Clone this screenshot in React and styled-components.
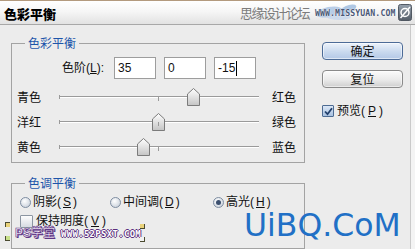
import React from "react";
import styled, { createGlobalStyle } from "styled-components";

const Global = createGlobalStyle`
  html, body { margin: 0; padding: 0; background: #ececec; }
  #root { width: 415px; height: 249px; overflow: hidden; }
`;

const FONT = `"Liberation Sans", "Noto Sans CJK SC", sans-serif`;
const CJK = `"Noto Sans CJK SC", sans-serif`;

const Window = styled.div`
  position: relative;
  width: 415px;
  height: 249px;
  overflow: hidden;
  display: flex;
  flex-direction: column;
  background: #f4f4f4;
  font-family: ${FONT};
  font-size: 12px;
  color: #111;
`;

const TitleBar = styled.div`
  flex: 0 0 auto;
  height: 23px;
  border-top: 1px solid #b39a7e;
  border-bottom: 1px solid #a8a8a8;
  background: linear-gradient(#ffffff, #f6f6f6 45%, #e2e2e2);
  display: flex;
  align-items: center;
  padding: 0 3px 0 4px;
`;

const Title = styled.span`
  font-family: ${CJK};
  font-weight: 900;
  font-size: 13px;
  line-height: 14px;
  color: #000;
  margin-top: 2px;
`;

const TitleRight = styled.div`
  margin-left: auto;
  display: flex;
  align-items: center;
`;

const Forum = styled.span`
  font-family: ${CJK};
  font-size: 13px;
  line-height: 14px;
  letter-spacing: -1.5px;
  color: #7c7c7c;
  margin-right: 6px;
`;

const Logo = styled.div`
  position: relative;
  width: 97px;
  height: 20px;
  display: flex;
  align-items: center;
`;

const Swoosh = styled.svg`
  position: absolute;
  left: 0;
  top: 0;
`;

const LogoIcon = styled.svg`
  position: absolute;
  right: 0;
  top: 1px;
`;

const LogoText = styled.span`
  position: relative;
  z-index: 1;
  font-family: "DejaVu Sans Mono", monospace;
  font-weight: bold;
  font-size: 8.2px;
  line-height: 10px;
  letter-spacing: 0.1px;
  color: #4b5876;
  text-shadow: 0 0 1px #fff, 0 0 1px #fff;
`;

const Content = styled.div`
  flex: 1;
  display: flex;
`;

const Panel = styled.div`
  width: 399px;
  padding-left: 11px;
  display: flex;
  background: #ececec;
  border-right: 1px solid #cacaca;
`;

const Main = styled.div`
  width: 294px;
  padding-top: 11px;
  display: flex;
  flex-direction: column;
`;

const Group = styled.fieldset`
  margin: ${(p) => p.$top}px 0 0;
  padding: ${(p) => p.$padTop}px 0 3px;
  border: 1px solid #a3a3a3;
  min-width: 0;
  flex: ${(p) => (p.$grow ? 1 : "0 0 auto")};
`;

const Legend = styled.legend`
  margin-left: 13px;
  padding: 0 3px;
  color: #1d55aa;
  font-family: ${CJK};
  font-size: 12px;
  line-height: 14px;
`;

const LevelsRow = styled.div`
  display: flex;
  align-items: center;
  height: 22px;
  padding-left: 50px;
`;

const LevelsLabel = styled.span`
  width: 52px;
  line-height: 14px;
`;

const Field = styled.div`
  box-sizing: border-box;
  width: 42px;
  height: 22px;
  margin-right: 8px;
  border: 1px solid #9d9d9d;
  background: #fff;
  display: flex;
  align-items: center;
  padding-left: 3px;
  font-size: 12px;
  color: #111;
`;

const Caret = styled.span`
  display: inline-block;
  width: 1px;
  height: 15px;
  margin-left: 1px;
  background: #000;
`;

const Key = styled.span`
  text-decoration: underline;
  text-underline-offset: 1px;
`;

const Sliders = styled.div`
  margin-top: 5px;
  display: flex;
  flex-direction: column;
`;

const SliderRow = styled.div`
  display: flex;
  align-items: center;
  height: 25px;
  padding-left: 5px;
`;

const SideLabel = styled.span`
  width: 42px;
  line-height: 14px;
  font-family: ${CJK};
`;

const Track = styled.div`
  position: relative;
  align-self: flex-start;
  margin-top: 12px;
  width: 200px;
  height: 0;
  border-top: 1px solid #9a9a9a;
  border-bottom: 1px solid #ffffff;

  &::before,
  &::after {
    content: "";
    position: absolute;
    width: 1px;
    background: #9a9a9a;
  }
  &::before {
    left: 0;
    top: -2px;
    height: 4px;
  }
  &::after {
    left: 99px;
    top: 0;
    height: 4px;
  }
`;

const ThumbSvg = styled.svg`
  position: absolute;
  top: -9px;
`;

const EndLabel = styled.span`
  margin-left: 13px;
  line-height: 14px;
  font-family: ${CJK};
`;

const RadioRow = styled.div`
  display: grid;
  grid-template-columns: 90px 103px auto;
  align-items: center;
  height: 16px;
  padding-left: 8px;
`;

const Option = styled.label`
  display: flex;
  align-items: center;
  gap: 2px;
  line-height: 13px;
`;

const Radio = styled.span`
  box-sizing: border-box;
  width: 11px;
  height: 11px;
  border-radius: 50%;
  border: 1px solid #7f8ea2;
  background: radial-gradient(circle at 40% 35%, #ffffff, #d3d9e1 70%, #b9c2ce);
  display: flex;
  align-items: center;
  justify-content: center;

  &::after {
    content: "";
    width: 5px;
    height: 5px;
    border-radius: 50%;
    background: ${(p) => (p.$on ? "#3b4f6e" : "transparent")};
  }
`;

const CheckRow = styled.div`
  display: flex;
  align-items: center;
  gap: 3px;
  height: 14px;
  margin-top: ${(p) => p.$mt}px;
  padding-left: ${(p) => p.$pl}px;
  line-height: 13px;
`;

const Box = styled.span`
  box-sizing: border-box;
  width: ${(p) => p.$size}px;
  height: ${(p) => p.$size}px;
  border: 1px solid ${(p) => (p.$on ? "#4d6b92" : "#8c96a2")};
  border-radius: 1px;
  background: ${(p) =>
    p.$on
      ? "linear-gradient(#dbe7f6, #a8c1e0)"
      : "linear-gradient(#fdfdfd, #d6dbe1)"};
  display: flex;
  align-items: center;
  justify-content: center;
`;

const Side = styled.div`
  margin-left: 17px;
  width: 81px;
  padding-top: 17px;
  display: flex;
  flex-direction: column;
`;

const Button = styled.button`
  box-sizing: border-box;
  width: 81px;
  height: 18px;
  margin: 0 0 10px;
  padding: 0;
  border-radius: 4px;
  border: 1px solid ${(p) => (p.$primary ? "#4c6b97" : "#8a8a8a")};
  background: ${(p) =>
    p.$primary
      ? "linear-gradient(#edf3fb, #c9d9ee 55%, #b3c8e6)"
      : "linear-gradient(#fbfbfb, #eaeaea 55%, #cfcfcf)"};
  box-shadow: inset 0 0 0 1px rgba(255, 255, 255, 0.55);
  font-family: ${CJK};
  font-size: 12px;
  line-height: 14px;
  color: #111;
`;

const BigMark = styled.div`
  position: absolute;
  left: 244px;
  top: 214px;
  font-family: "DejaVu Sans", sans-serif;
  font-size: 31.5px;
  line-height: 22px;
  color: #2170c6;
`;

const PsMark = styled.div`
  position: absolute;
  left: 15px;
  top: 228px;
  display: flex;
  align-items: center;
  gap: 6px;
`;

const PsName = styled.span`
  font-family: ${FONT};
  font-weight: bold;
  font-size: 12px;
  line-height: 11px;
  color: #efe6f7;
  -webkit-text-stroke: 0.6px #5e3584;
  text-shadow: 1px 1px 0 #5e3584;
`;

const PsUrl = styled.span`
  font-family: "DejaVu Sans Mono", monospace;
  font-weight: bold;
  font-size: 9px;
  line-height: 10px;
  color: #ffffff;
  letter-spacing: 0.3px;
  text-shadow: 1px 0 0 #5a2e7c, -1px 0 0 #5a2e7c, 0 1px 0 #5a2e7c, 0 -1px 0 #5a2e7c;
`;

const Corner = styled.span`
  position: absolute;
  left: ${(p) => p.$x}px;
  top: ${(p) => p.$y}px;
  width: 4px;
  height: 4px;
  background: ${(p) => p.$c};
  border: 1px solid #4a4a30;
  border-width: ${(p) => p.$bw};
`;

function Thumb({ value }) {
  const left = 100 + value - 7;
  return (
    <ThumbSvg width="13" height="18" viewBox="0 0 13 18" style={{ left }}>
      <defs>
        <linearGradient id="tg" x1="0" y1="0" x2="0" y2="1">
          <stop offset="0" stopColor="#ffffff" />
          <stop offset="1" stopColor="#c4c4c4" />
        </linearGradient>
      </defs>
      <path
        d="M6.5 0.5 L12.5 6 L12.5 17.5 L0.5 17.5 L0.5 6 Z"
        fill="url(#tg)"
        stroke="#7b7b7b"
        strokeWidth="1"
      />
    </ThumbSvg>
  );
}

const sliders = [
  { left: "青色", right: "红色", value: 35 },
  { left: "洋红", right: "绿色", value: 0 },
  { left: "黄色", right: "蓝色", value: -15 },
];

function Check() {
  return (
    <svg width="9" height="9" viewBox="0 0 9 9">
      <path d="M1 4.5 L3.5 7.2 L8 1.2" fill="none" stroke="#22406c" strokeWidth="1.8" />
    </svg>
  );
}

export default function App() {
  return (
    <>
      <Global />
      <Window>
        <TitleBar>
          <Title>色彩平衡</Title>
          <TitleRight>
            <Forum>思缘设计论坛</Forum>
            <Logo>
              <Swoosh width="46" height="20" viewBox="0 0 46 20">
                <ellipse cx="14" cy="9" rx="13" ry="5" fill="#a9c2e2" opacity="0.8" transform="rotate(-12 14 9)" />
                <ellipse cx="32" cy="7" rx="10" ry="4" fill="#8fb0da" opacity="0.7" transform="rotate(-25 32 7)" />
                <ellipse cx="24" cy="14" rx="12" ry="3" fill="#c5d6ec" opacity="0.8" />
              </Swoosh>
              <LogoIcon width="14" height="17" viewBox="0 0 14 17">
                <defs>
                  <linearGradient id="lg" x1="0" y1="0" x2="0" y2="1">
                    <stop offset="0" stopColor="#7d8a99" />
                    <stop offset="1" stopColor="#2f3b49" />
                  </linearGradient>
                </defs>
                <rect x="0.5" y="0.5" width="13" height="16" rx="2" fill="url(#lg)" stroke="#2a3440" opacity="0.8" />
                <circle cx="7" cy="8.5" r="4" fill="none" stroke="#fff" strokeWidth="1.5" />
                <path d="M2.5 14 L12 3" stroke="#fff" strokeWidth="1.5" />
              </LogoIcon>
              <LogoText>WWW.MISSYUAN.COM</LogoText>
            </Logo>
          </TitleRight>
        </TitleBar>

        <Content>
          <Panel>
            <Main>
              <Group $top={0} $padTop={7}>
                <Legend>色彩平衡</Legend>
                <LevelsRow>
                  <LevelsLabel>
                    色阶(<Key>L</Key>):
                  </LevelsLabel>
                  <Field>35</Field>
                  <Field>0</Field>
                  <Field>
                    -15
                    <Caret />
                  </Field>
                </LevelsRow>
                <Sliders>
                  {sliders.map((s) => (
                    <SliderRow key={s.left}>
                      <SideLabel>{s.left}</SideLabel>
                      <Track>
                        <Thumb value={s.value} />
                      </Track>
                      <EndLabel>{s.right}</EndLabel>
                    </SliderRow>
                  ))}
                </Sliders>
              </Group>

              <Group $top={13} $padTop={4} $grow>
                <Legend>色调平衡</Legend>
                <RadioRow>
                  <Option>
                    <Radio />
                    阴影(<Key>S</Key>)
                  </Option>
                  <Option>
                    <Radio />
                    中间调(<Key>D</Key>)
                  </Option>
                  <Option>
                    <Radio $on />
                    高光(<Key>H</Key>)
                  </Option>
                </RadioRow>
                <CheckRow $mt={4} $pl={8}>
                  <Box $size={13} />
                  保持明度(<Key>V</Key>)
                </CheckRow>
              </Group>
            </Main>

            <Side>
              <Button $primary>确定</Button>
              <Button>复位</Button>
              <CheckRow $mt={6} $pl={0}>
                <Box $size={12} $on>
                  <Check />
                </Box>
                预览(<Key>P</Key>)
              </CheckRow>
            </Side>
          </Panel>
        </Content>

        <BigMark>UiBQ.CoM</BigMark>
        <PsMark>
          <PsName>PS学堂</PsName>
          <PsUrl>WWW.52PSXT.COM</PsUrl>
        </PsMark>
        <Corner $x={5} $y={222} $c="#e9d27a" $bw="1px 0 0 1px" />
        <Corner $x={140} $y={224} $c="#e9d27a" $bw="0 1px 1px 0" />
        <Corner $x={5} $y={236} $c="#c7e08a" $bw="0 0 1px 1px" />
        <Corner $x={140} $y={237} $c="#f2f2f2" $bw="0 1px 1px 0" />
      </Window>
    </>
  );
}
